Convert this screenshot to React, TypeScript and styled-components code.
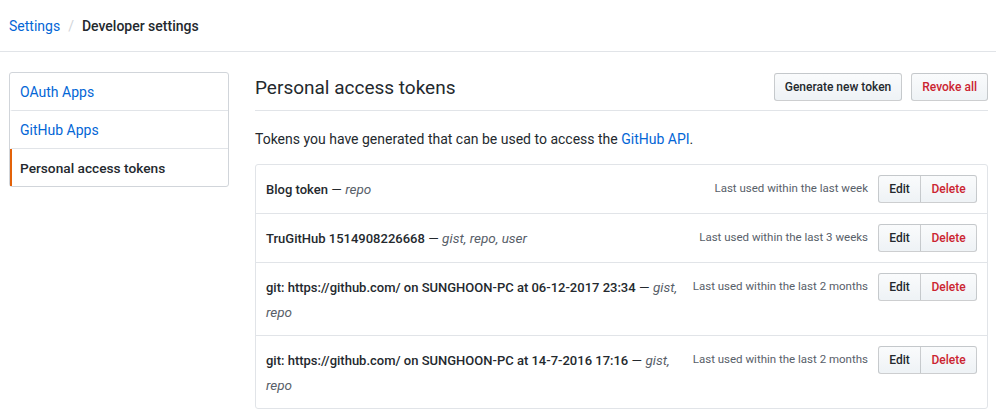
import React from 'react';
import styled, { createGlobalStyle } from 'styled-components';

const FONT = 'Roboto, "Liberation Sans", Arial, sans-serif';

const GlobalStyle = createGlobalStyle`
  html, body {
    margin: 0;
    padding: 0;
    background: #fff;
  }
  body {
    font-family: ${FONT};
    font-size: 14px;
    color: #24292e;
  }
`;

// Шапка с хлебными крошками
const Header = styled.div`
  height: 51px;
  border-bottom: 1px solid #e1e4e8;
  display: flex;
  align-items: center;
  padding-left: 9px;
  font-size: 14px;
`;

const Crumb = styled.a`
  color: #0366d6;
  text-decoration: none;
`;

const Divider = styled.span`
  color: #d1d5da;
  margin: 0 8px;
`;

const CrumbCurrent = styled.strong`
  font-weight: 500;
  color: #24292e;
`;

const Page = styled.div`
  display: flex;
  gap: 26px;
  padding: 20px 8px 0 9px;
  align-items: flex-start;
`;

// Боковое меню
const Menu = styled.nav`
  width: 220px;
  flex-shrink: 0;
  border: 1px solid #d1d5da;
  border-radius: 3px;
  box-sizing: border-box;
`;

const MenuItem = styled.a<{ $selected?: boolean }>`
  display: block;
  height: 38px;
  line-height: 38px;
  padding-left: 8px;
  border-bottom: 1px solid #e1e4e8;
  border-left: 2px solid ${(p) => (p.$selected ? '#e36209' : 'transparent')};
  color: ${(p) => (p.$selected ? '#24292e' : '#0366d6')};
  font-weight: ${(p) => (p.$selected ? 500 : 400)};
  font-size: ${(p) => (p.$selected ? '13.7px' : '14px')};
  text-decoration: none;
  box-sizing: border-box;

  &:last-child {
    border-bottom: none;
    height: 37px;
  }
`;

const Main = styled.div`
  flex: 1;
  min-width: 0;
`;

const TitleRow = styled.div`
  display: flex;
  align-items: flex-start;
  justify-content: space-between;
  height: 38px;
  border-bottom: 1px solid #e1e4e8;
`;

const Title = styled.h2`
  margin: 0;
  font-size: 19px;
  font-weight: 400;
  line-height: 32px;
`;

const Actions = styled.div`
  display: flex;
  gap: 9px;
  padding-top: 1px;
`;

const Button = styled.button<{ $danger?: boolean }>`
  height: 28px;
  padding: 0 10px;
  font-family: ${FONT};
  font-size: 12px;
  font-weight: 500;
  color: ${(p) => (p.$danger ? '#cb2431' : '#24292e')};
  background: linear-gradient(-180deg, #fafbfc 0%, #eff3f6 90%);
  border: 1px solid rgba(27, 31, 35, 0.2);
  border-radius: 3px;
  cursor: pointer;
`;

const Description = styled.p`
  margin: 0;
  padding: 18px 0 0;
  height: 35px;
  line-height: 20px;
`;

const Link = styled.a`
  color: #0366d6;
  text-decoration: none;
`;

const TokenList = styled.div`
  border: 1px solid #e1e4e8;
  border-radius: 3px;
`;

const TokenRow = styled.div`
  display: flex;
  align-items: flex-start;
  padding: 10px;
  border-bottom: 1px solid #e1e4e8;
  min-height: 28px;

  &:last-child {
    border-bottom: none;
  }
`;

const TokenName = styled.div`
  flex: 1;
  font-size: 13.5px;
  line-height: 25px;
  padding-top: 2px;
`;

const Strong = styled.strong`
  font-weight: 500;
  font-size: 13px;
`;

const Scope = styled.em`
  color: #586069;
`;

const LastUsed = styled.span`
  font-size: 11.5px;
  color: #586069;
  line-height: 25px;
  padding-top: 1px;
  margin: 0 10px 0 8px;
  white-space: nowrap;
`;

const ButtonGroup = styled.div`
  display: flex;
  flex-shrink: 0;

  & > button:first-child {
    border-radius: 3px 0 0 3px;
    width: 43px;
    padding: 0;
  }
  & > button:last-child {
    border-radius: 0 3px 3px 0;
    margin-left: -1px;
    width: 57px;
    padding: 0;
  }
`;

const tokens = [
  { name: 'Blog token', scopes: ['repo'], used: 'Last used within the last week' },
  { name: 'TruGitHub 1514908226668', scopes: ['gist', 'repo', 'user'], used: 'Last used within the last 3 weeks' },
  {
    name: 'git: https://github.com/ on SUNGHOON-PC at 06-12-2017 23:34',
    scopes: ['gist', 'repo'],
    used: 'Last used within the last 2 months',
  },
  {
    name: 'git: https://github.com/ on SUNGHOON-PC at 14-7-2016 17:16',
    scopes: ['gist', 'repo'],
    used: 'Last used within the last 2 months',
  },
];

const App: React.FC = () => {
  return (
    <>
      <GlobalStyle />
      <Header>
        <Crumb href="#">Settings</Crumb>
        <Divider>/</Divider>
        <CrumbCurrent>Developer settings</CrumbCurrent>
      </Header>
      <Page>
        <Menu>
          <MenuItem href="#">OAuth Apps</MenuItem>
          <MenuItem href="#">GitHub Apps</MenuItem>
          <MenuItem href="#" $selected>
            Personal access tokens
          </MenuItem>
        </Menu>
        <Main>
          <TitleRow>
            <Title>Personal access tokens</Title>
            <Actions>
              <Button>Generate new token</Button>
              <Button $danger>Revoke all</Button>
            </Actions>
          </TitleRow>
          <Description>
            Tokens you have generated that can be used to access the <Link href="#">GitHub API</Link>.
          </Description>
          <TokenList>
            {tokens.map((t) => (
              <TokenRow key={t.name}>
                <TokenName>
                  <Strong>{t.name}</Strong> —{' '}
                  {t.scopes.map((s, i) => (
                    <React.Fragment key={s}>
                      <Scope>{i < t.scopes.length - 1 ? `${s},` : s}</Scope>
                      {i < t.scopes.length - 1 ? ' ' : null}
                    </React.Fragment>
                  ))}
                </TokenName>
                <LastUsed>{t.used}</LastUsed>
                <ButtonGroup>
                  <Button>Edit</Button>
                  <Button $danger>Delete</Button>
                </ButtonGroup>
              </TokenRow>
            ))}
          </TokenList>
        </Main>
      </Page>
    </>
  );
};

export default App;
